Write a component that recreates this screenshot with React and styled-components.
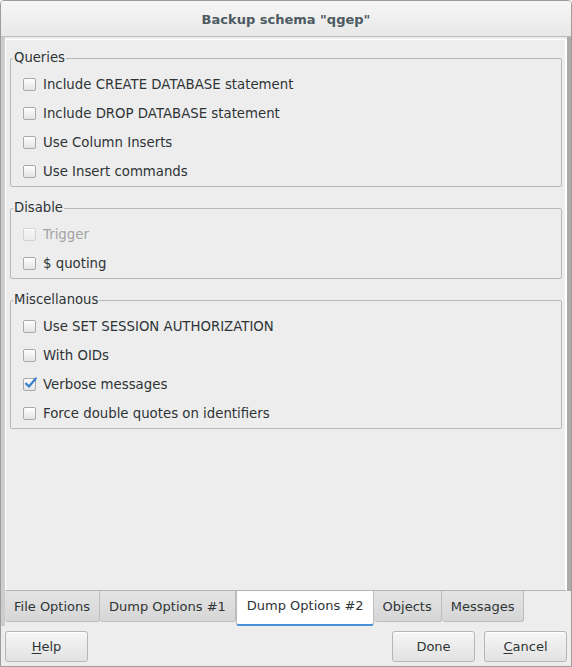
import React from "react";
import styled, { createGlobalStyle } from "styled-components";

const GlobalStyle = createGlobalStyle`
  html, body {
    margin: 0;
    padding: 0;
    background: #ffffff;
  }
  body {
    font-family: "DejaVu Sans", "Liberation Sans", sans-serif;
    font-size: 13px;
    color: #2e3436;
  }
`;

const groups = [
  {
    title: "Queries",
    items: [
      { label: "Include CREATE DATABASE statement" },
      { label: "Include DROP DATABASE statement" },
      { label: "Use Column Inserts" },
      { label: "Use Insert commands" },
    ],
  },
  {
    title: "Disable",
    items: [{ label: "Trigger", disabled: true }, { label: "$ quoting" }],
  },
  {
    title: "Miscellanous",
    items: [
      { label: "Use SET SESSION AUTHORIZATION" },
      { label: "With OIDs" },
      { label: "Verbose messages", checked: true },
      { label: "Force double quotes on identifiers" },
    ],
  },
];

const tabs = [
  "File Options",
  "Dump Options #1",
  "Dump Options #2",
  "Objects",
  "Messages",
];

const App = () => {
  return (
    <>
      <GlobalStyle />
      <Window>
        <TitleBar>Backup schema "qgep"</TitleBar>
        <Middle>
          <Page>
            {groups.map((group) => (
              <Group key={group.title}>
                <Legend>{group.title}</Legend>
                {group.items.map((item) => (
                  <Row key={item.label} $disabled={item.disabled}>
                    <Box $disabled={item.disabled}>
                      {item.checked && (
                        <Check viewBox="0 0 16 16">
                          <path
                            d="M3.2 8.2 L6.4 11.2 L13.6 2.6"
                            fill="none"
                            stroke="#3d7ec9"
                            strokeWidth="2.4"
                            strokeLinecap="round"
                            strokeLinejoin="round"
                          />
                        </Check>
                      )}
                    </Box>
                    {item.label}
                  </Row>
                ))}
              </Group>
            ))}
          </Page>
        </Middle>
        <TabBar>
          {tabs.map((tab) => (
            <Tab key={tab} $active={tab === "Dump Options #2"}>
              {tab}
            </Tab>
          ))}
        </TabBar>
        <ButtonBar>
          <Button>
            <u>H</u>elp
          </Button>
          <Spacer />
          <Button>Done</Button>
          <Button>
            <u>C</u>ancel
          </Button>
        </ButtonBar>
      </Window>
    </>
  );
};

const Window = styled.div`
  box-sizing: border-box;
  width: 572px;
  height: 667px;
  background: #ededed;
  border: 1px solid #9c9c9c;
  border-radius: 4px 4px 0 0;
  display: flex;
  flex-direction: column;
  overflow: hidden;
`;

const TitleBar = styled.div`
  height: 36px;
  flex-shrink: 0;
  display: flex;
  align-items: center;
  justify-content: center;
  padding-top: 1px;
  box-sizing: border-box;
  font-weight: bold;
  font-size: 13px;
  color: #4d5a61;
  background: linear-gradient(#f6f6f6, #e8e8e8);
  border-bottom: 1px solid #bcbcbc;
`;

const Middle = styled.div`
  flex: 1;
  min-height: 0;
  display: flex;
  border-left: 4px solid #cdcdcd;
  border-right: 4px solid #aaaaaa;
  padding-top: 2px;
`;

const Page = styled.div`
  flex: 1;
  border: 1px solid #ffffff;
  border-bottom: 1px solid #b4b4b4;
  border-right-width: 2px;
  padding: 10px 3px 0 4px;
  display: flex;
  flex-direction: column;
  gap: 13px;
`;

const Group = styled.fieldset`
  margin: 0;
  padding: 4px 12px 0 12px;
  border: 1px solid #b8b8b8;
  border-radius: 2px;
  min-width: 0;
`;

const Legend = styled.legend`
  padding: 0 1px;
  margin-left: -10px;
  line-height: 16px;
  font-size: 13.2px;
  color: #2e3436;
`;

const Row = styled.div`
  height: 29px;
  display: flex;
  align-items: center;
  gap: 7px;
  font-size: 13.3px;
  color: ${(p) => (p.$disabled ? "#a2a4a4" : "#2e3436")};
`;

const Box = styled.span`
  position: relative;
  box-sizing: border-box;
  width: 13px;
  height: 13px;
  flex-shrink: 0;
  border: 1px solid ${(p) => (p.$disabled ? "#d2d2d2" : "#a9a9a9")};
  border-radius: 2px;
  background: ${(p) =>
    p.$disabled
      ? "linear-gradient(#f4f4f4, #ececec)"
      : "linear-gradient(#fefefe, #e4e4e4)"};
  box-shadow: inset 0 1px 0 #ffffff;
`;

const Check = styled.svg`
  position: absolute;
  left: -1px;
  top: -3px;
  width: 15px;
  height: 15px;
`;

const TabBar = styled.div`
  height: 35px;
  flex-shrink: 0;
  display: flex;
  align-items: flex-start;
  border-left: 4px solid #cdcdcd;
`;

const Tab = styled.div`
  box-sizing: border-box;
  height: ${(p) => (p.$active ? "35px" : "31px")};
  padding: 0 9px 0 ${(p) => (p.$active ? "10px" : "9px")};
  display: flex;
  align-items: center;
  padding-bottom: ${(p) => (p.$active ? "4px" : "0")};
  border: 1px solid #bdbdbd;
  border-top: none;
  border-left: ${(p) => (p.$active ? "1px solid #bdbdbd" : "none")};
  border-bottom: ${(p) =>
    p.$active ? "2px solid #4a90d9" : "1px solid #bdbdbd"};
  border-radius: 0 0 3px 3px;
  background: ${(p) =>
    p.$active ? "#ffffff" : "linear-gradient(#e4e4e4, #d6d6d6)"};
  color: #2e3436;
  white-space: nowrap;
`;

const ButtonBar = styled.div`
  height: 40px;
  flex-shrink: 0;
  box-sizing: border-box;
  display: flex;
  align-items: flex-start;
  gap: 9px;
  padding: 5px 4px 0 4px;
`;

const Spacer = styled.div`
  flex: 1;
`;

const Button = styled.div`
  box-sizing: border-box;
  width: 83px;
  height: 31px;
  display: flex;
  align-items: center;
  justify-content: center;
  border: 1px solid #b6b6b6;
  border-radius: 3px;
  background: linear-gradient(#f6f6f6, #e2e2e2);
  box-shadow: inset 0 1px 0 #ffffff;
  color: #2e3436;
  u {
    text-decoration-thickness: 1px;
    text-underline-offset: 2px;
  }
`;

export default App;
